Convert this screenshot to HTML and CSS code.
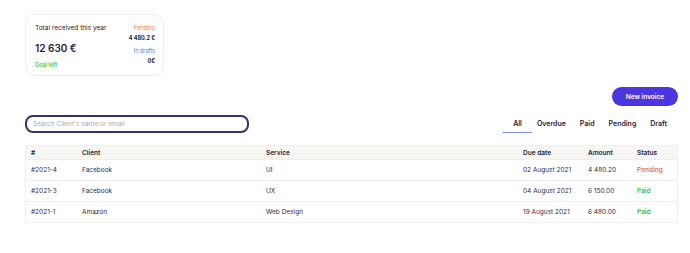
FILE: index.html
```html
<!DOCTYPE html>
<html lang="en">
<head>
  <meta charset="UTF-8">
  <title>Invoices</title>
  <link rel="stylesheet" href="styles.css">
</head>
<body>
  <div class="page">
    <div class="summary">
      <div class="summary-left">
        <div class="label">Total received this year</div>
        <div class="total">12 630 €</div>
        <div class="goal">Goal left</div>
      </div>
      <div class="summary-right">
        <div class="pending-label">Pending</div>
        <div class="value">4 480.2 €</div>
        <div class="drafts-label">In drafts</div>
        <div class="value">0€</div>
      </div>
    </div>

    <div class="actions">
      <button class="new-btn">New invoice</button>
    </div>

    <div class="toolbar">
      <input type="text" class="search" placeholder="Search Client's name or email">
      <div class="tabs">
        <span class="tab active">All</span>
        <span class="tab">Overdue</span>
        <span class="tab">Paid</span>
        <span class="tab">Pending</span>
        <span class="tab">Draft</span>
      </div>
    </div>

    <table class="invoices">
      <thead>
        <tr><th class="c-id">#</th><th class="c-client">Client</th><th class="c-service">Service</th><th class="c-date">Due date</th><th class="c-amount">Amount</th><th>Status</th></tr>
      </thead>
      <tbody>
        <tr><td>#2021-4</td><td>Facebook</td><td>UI</td><td>02 August 2021</td><td>4 480.20</td><td class="st-pending">Pending</td></tr>
        <tr><td>#2021-3</td><td>Facebook</td><td>UX</td><td>04 August 2021</td><td>6 150.00</td><td class="st-paid">Paid</td></tr>
        <tr><td>#2021-1</td><td>Amazon</td><td>Web Design</td><td>19 August 2021</td><td>6 480.00</td><td class="st-paid">Paid</td></tr>
      </tbody>
    </table>
  </div>
</body>
</html>
```

FILE: styles.css
```css
body { margin: 0; font-family: Inter, "Open Sans", sans-serif; color: #1e1a3c; background: #fff; }
.page { padding: 14px 12px 0 25px; }

/* Summary card */
.summary { width: 139px; height: 62px; box-sizing: border-box; border: 1px solid #eeeeee; border-radius: 10px; padding: 9px 8px 0 9px; display: flex; justify-content: space-between; }
.label { font-size: 6.5px; color: #222; }
.total { font-size: 10px; font-weight: 600; margin-top: 10px; }
.goal { font-size: 5.5px; font-weight: 600; color: #4cc23a; margin-top: 8px; }
.summary-right { text-align: right; font-size: 5.5px; }
.pending-label { color: #f08a3c; margin-top: 1px; }
.drafts-label { color: #3f7ff0; margin-top: 7px; }
.value { font-weight: 700; margin-top: 4px; }

/* Actions */
.actions { display: flex; justify-content: flex-end; margin-top: 11px; }
.new-btn { background: #4c36e2; color: #fff; border: none; border-radius: 10px; width: 66px; height: 19px; font-family: inherit; font-size: 6.5px; font-weight: 600; padding: 0; }

/* Toolbar */
.toolbar { display: flex; justify-content: space-between; align-items: center; margin-top: 9px; }
.search { width: 224px; height: 18px; box-sizing: border-box; border: 2px solid #3b3168; border-radius: 8px; padding: 0 6px; font-family: inherit; font-size: 6.5px; outline: none; }
.search::placeholder { color: #a9a9b4; }
.tabs { display: flex; margin-right: 4px; }
.tab { font-size: 7px; font-weight: 600; padding: 3px 7px 4px; border-bottom: 1.5px solid transparent; }
.tab.active { border-bottom-color: #7b8ff0; padding: 3px 10px 4px; margin-right: -2px; }

/* Table */
.invoices { width: 653px; border-collapse: collapse; margin-top: 12px; font-size: 6.5px; border: 1px solid #f1f0ee; }
.invoices th { background: #f7f6f3; font-weight: 600; text-align: left; height: 13px; padding: 0 5px; }
.invoices td { height: 20px; padding: 0 5px; border-top: 1px solid #efeeec; color: #2e2b4a; }
.c-id { width: 41px; }
.c-client { width: 174px; }
.c-service { width: 247px; }
.c-date { width: 55px; }
.c-amount { width: 39px; }
.invoices .st-pending { color: #f0772a; font-weight: 600; }
.invoices .st-paid { color: #3fbf2a; font-weight: 600; }
```
